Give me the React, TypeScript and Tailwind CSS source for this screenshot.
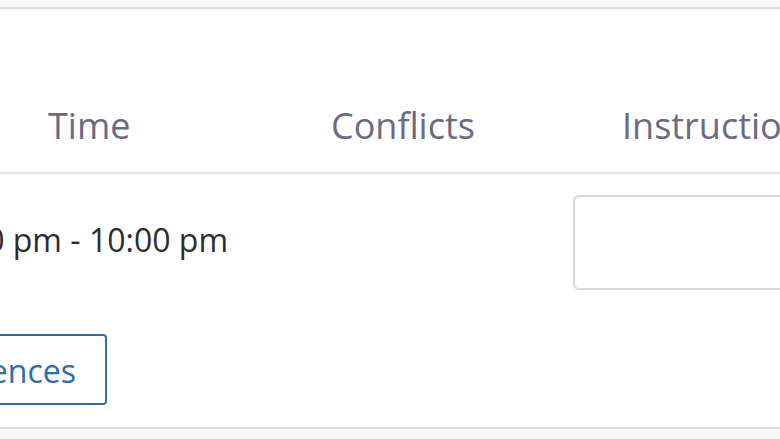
import React from "react";

const font = { fontFamily: '"Open Sans", "Lato", sans-serif' };

export default function App() {
  return (
    <div
      className="w-[780px] h-[439px] overflow-hidden bg-white flex flex-col"
      style={font}
    >
      {/* page band above the table */}
      <div className="h-[7px] shrink-0 bg-[#f9f9f7] border-b-2 border-[#dcdcdc] box-content" />

      {/* header row */}
      <div className="grid grid-cols-[283px_290px_1fr] h-[165px] shrink-0 items-end pb-[24px] border-b-2 border-[#e6e6e6] text-[36px] leading-[44px] text-[#6b6a80] whitespace-nowrap">
        <div className="pl-[48px]">Time</div>
        <div className="pl-[48px]">Conflicts</div>
        <div className="pl-[49px]">Instructions</div>
      </div>

      {/* body row */}
      <div className="grid grid-cols-[283px_290px_1fr] shrink-0 pt-[21px] whitespace-nowrap">
        <div className="flex justify-end w-[228px] pt-[25px]">
          <span className="shrink-0 text-[32px] leading-[40px] text-[#2d2d2d]">8:00 pm - 10:00 pm</span>
        </div>
        <div />
        <div>
          <div className="h-[95px] w-[260px] rounded-[6px] border-2 border-[#d9d9d9] bg-white" />
        </div>
      </div>

      <div className="flex-1 pt-[44px]">
        <div className="flex justify-end w-[107px]">
          <button className="shrink-0 h-[71px] px-[29px] pt-[2px] rounded-[4px] border-2 border-[#2c6ea6] text-[#2c6ea6] text-[32px] leading-[40px] whitespace-nowrap">
            Preferences
          </button>
        </div>
      </div>

      <div className="h-[10px] shrink-0 bg-[#f7f7f7] border-t-2 border-[#dcdcdc] box-content" />
    </div>
  );
}
